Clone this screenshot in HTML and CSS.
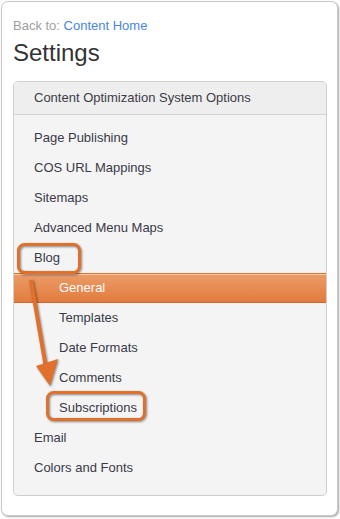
FILE: index.html
```html
<!DOCTYPE html>
<html lang="en">
  <head>
    <meta charset="UTF-8" />
    <meta name="viewport" content="width=device-width, initial-scale=1.0" />
    <title>Settings</title>
    <link rel="stylesheet" href="styles.css">
  </head>
  <body>
    <div class="page">
      <div class="back">Back to: <a href="#">Content Home</a></div>
      <h1>Settings</h1>

      <div class="panel">
        <div class="panel-head">Content Optimization System Options</div>
        <ul class="menu">
          <li>Page Publishing</li>
          <li>COS URL Mappings</li>
          <li>Sitemaps</li>
          <li>Advanced Menu Maps</li>
          <li>Blog</li>
          <li class="sub active">General</li>
          <li class="sub">Templates</li>
          <li class="sub">Date Formats</li>
          <li class="sub">Comments</li>
          <li class="sub">Subscriptions</li>
          <li>Email</li>
          <li>Colors and Fonts</li>
        </ul>
      </div>
    </div>

    <!-- annotation layer -->
    <svg class="marks" width="340" height="519" viewBox="0 0 340 519">
      <g class="shadowed" fill="none" stroke="#e0702c" stroke-width="3">
        <rect x="18.5" y="244.5" width="61" height="28" rx="6" />
        <rect x="47.5" y="392.5" width="97" height="27" rx="6" />
        <line x1="31" y1="280" x2="46" y2="368" stroke-width="4" />
      </g>
      <polygon class="shadowed" points="36,366 58,359 50,386" fill="#e0702c" />
    </svg>
  </body>
</html>
```

FILE: styles.css
```css
* {
  margin: 0;
  padding: 0;
  box-sizing: border-box;
}

body {
  font-family: "Liberation Sans", Arial, sans-serif;
  background: #fff;
  width: 340px;
  height: 519px;
  position: relative;
}

.page {
  width: 337px;
  height: 515px;
  margin: 1px 0 0 1px;
  padding: 15px 10px 0 11px;
  border: 1px solid #c8c8c8;
  border-radius: 7px;
  box-shadow: 1px 1px 2px rgba(0, 0, 0, 0.35);
  background: #fff;
}

.back {
  font-size: 13px;
  line-height: 18px;
  color: #a0a0a0;
}

.back a {
  color: #4a86e0;
  text-decoration: none;
}

h1 {
  font-size: 24px;
  font-weight: normal;
  line-height: 30px;
  color: #333;
  margin-top: 3px;
}

.panel {
  margin-top: 13px;
  border: 1px solid #cfcfcf;
  border-radius: 5px;
  background: #f4f4f4;
  overflow: hidden;
}

.panel-head {
  height: 33px;
  line-height: 32px;
  padding-left: 20px;
  font-size: 13px;
  color: #3c3c46;
  background: #eeeeee;
  border-bottom: 1px solid #d2d2d2;
}

.menu {
  list-style: none;
  padding: 8px 0 12px;
}

.menu li {
  height: 30px;
  line-height: 30px;
  padding-left: 20px;
  font-size: 13px;
  color: #3a3a48;
}

.menu li.sub {
  padding-left: 45px;
}

.menu li.active {
  color: #fff;
  line-height: 28px;
  background: linear-gradient(#eb9c68, #e27c3e);
  border-top: 1px solid #e27432;
  border-bottom: 1px solid #d8682a;
  box-shadow: inset 0 1px 0 #f6c7a4;
}

.marks {
  position: absolute;
  top: 0;
  left: 0;
  pointer-events: none;
}

.shadowed {
  filter: drop-shadow(1px 1px 1px rgba(0, 0, 0, 0.45));
}
```
